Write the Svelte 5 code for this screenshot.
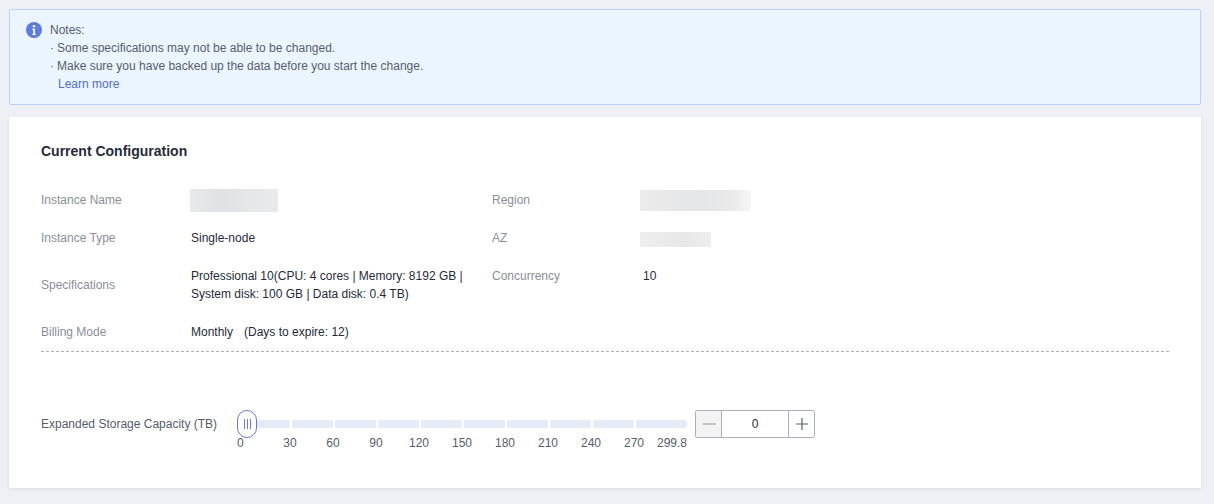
<script lang="ts">
  const middleTicks = [30, 60, 90, 120, 150, 180, 210, 240, 270];
  const middleSegments = 8;
  let capacity = 0;
</script>

<div class="page">
  <div class="notice">
    <svg class="notice-icon" viewBox="0 0 16 16" width="16" height="16">
      <circle cx="8" cy="8" r="8" fill="#5e7ce0" />
      <circle cx="8" cy="4.3" r="1.3" fill="#fff" />
      <path d="M6.4 6.7h2.6v5.2h1v1.2H6.2v-1.2h1.1V7.9H6.4z" fill="#fff" />
    </svg>
    <div class="notice-text">
      <div>Notes:</div>
      <div class="bullet"><span class="dot">·</span>Some specifications may not be able to be changed.</div>
      <div class="bullet"><span class="dot">·</span>Make sure you have backed up the data before you start the change.</div>
      <a class="learn" href="#more">Learn more</a>
    </div>
  </div>

  <div class="card">
    <h2>Current Configuration</h2>

    <div class="rows">
      <div class="row">
        <div class="field">
          <span class="label">Instance Name</span>
          <span class="blur blur-name"></span>
        </div>
        <div class="field side">
          <span class="label">Region</span>
          <span class="blur blur-region"></span>
        </div>
      </div>
      <div class="row">
        <div class="field">
          <span class="label">Instance Type</span>
          <span class="value">Single-node</span>
        </div>
        <div class="field side">
          <span class="label">AZ</span>
          <span class="blur blur-az"></span>
        </div>
      </div>
      <div class="row">
        <div class="field">
          <span class="label">Specifications</span>
          <span class="value specs">Professional 10(CPU: 4 cores | Memory: 8192 GB |<br />System disk: 100 GB | Data disk: 0.4 TB)</span>
        </div>
        <div class="field side top">
          <span class="label">Concurrency</span>
          <span class="value concurrency">10</span>
        </div>
      </div>
      <div class="row">
        <div class="field">
          <span class="label">Billing Mode</span>
          <span class="value">Monthly<span class="expire">(Days to expire: 12)</span></span>
        </div>
      </div>
    </div>

    <div class="divider"></div>

    <div class="expand">
      <span class="expand-label">Expanded Storage Capacity (TB)</span>
      <div class="slider">
        <div class="track">
          <span class="seg first"></span>
          {#each Array(middleSegments) as _}
            <span class="seg"></span>
          {/each}
          <span class="seg last"></span>
        </div>
        <div class="handle">
          <i></i><i></i><i></i>
        </div>
        <div class="ticks">
          <span class="tick-start">0</span>
          {#each middleTicks as t}
            <span class="tick">{t}</span>
          {/each}
          <span class="tick-end">299.8</span>
        </div>
      </div>
      <div class="stepper">
        <button class="step minus" aria-label="Decrease">
          <svg viewBox="0 0 14 14" width="14" height="14"><path d="M1 7h13" stroke="#adb0b8" stroke-width="1.4" /></svg>
        </button>
        <input class="num" value={capacity} />
        <button class="step plus" aria-label="Increase">
          <svg viewBox="0 0 14 14" width="14" height="14"><path d="M1 7h12M7 1v12" stroke="#575d6c" stroke-width="1.2" /></svg>
        </button>
      </div>
    </div>
  </div>
</div>

<style>
  :global(body) {
    margin: 0;
    background: #eef0f5;
  }

  .page {
    padding: 9px 13px 16px 9px;
    font-family: "Liberation Sans", Arial, sans-serif;
    font-size: 12px;
    line-height: 18px;
    color: #575d6c;
  }

  .notice {
    display: flex;
    gap: 8px;
    padding: 11px 16px 11px 16px;
    height: 96px;
    box-sizing: border-box;
    background: #ebf5ff;
    border: 1px solid #bccfff;
    border-radius: 2px;
  }

  .notice-icon {
    flex: none;
    margin-top: 1px;
  }

  .bullet {
    position: relative;
    padding-left: 7px;
  }

  .dot {
    position: absolute;
    left: 0;
    top: 0;
  }

  .learn {
    display: block;
    padding-left: 8px;
    color: #526ecc;
    text-decoration: none;
  }

  .card {
    margin-top: 12px;
    height: 371px;
    box-sizing: border-box;
    padding: 24px 32px 0;
    background: #fff;
    box-shadow: 0 1px 4px rgba(0, 0, 0, 0.08);
  }

  h2 {
    margin: 0;
    font-size: 14px;
    line-height: 20px;
    font-weight: 700;
    color: #252b3a;
  }

  .rows {
    display: flex;
    flex-direction: column;
    gap: 20px;
    margin-top: 30px;
  }

  .row {
    display: grid;
    grid-template-columns: 451px 1fr;
  }

  .field {
    display: flex;
    align-items: center;
  }

  .field.top {
    align-items: flex-start;
  }

  .label {
    flex: none;
    width: 150px;
    color: #8a8e99;
  }

  .side .label {
    width: 148px;
  }

  .value {
    color: #252b3a;
  }

  .specs {
    width: 280px;
  }

  .concurrency {
    padding-left: 3px;
  }

  .expire {
    margin-left: 11px;
  }

  .blur {
    display: block;
    background: linear-gradient(90deg, #e8e9ea, #e1e2e4 35%, #e6e7e9 70%, #e9eaeb);
  }

  .blur-name {
    width: 88px;
    height: 23px;
    margin: -2px 0 -3px -1px;
  }

  .blur-region {
    width: 111px;
    height: 21px;
    margin: -1px 0 -2px;
    background: linear-gradient(90deg, #ebebec, #e5e6e7 55%, #eaeaeb 85%, #f8f8f8);
  }

  .blur-az {
    width: 71px;
    height: 15px;
    margin: 1px 0 -1px;
    background: linear-gradient(90deg, #eeeeef, #e8e8e9 65%, #eeeeee);
  }

  .divider {
    margin-top: 10px;
    border-top: 1px dashed #adb0b8;
  }

  .expand {
    display: flex;
    align-items: flex-start;
    margin-top: 58px;
  }

  .expand-label {
    flex: none;
    width: 196px;
    margin-top: 5px;
  }

  .slider {
    position: relative;
    width: 450px;
    padding-top: 10px;
  }

  .track {
    display: flex;
    gap: 2px;
    margin-left: 3px;
    height: 8px;
  }

  .seg {
    width: 41px;
    background: #e7ebf8;
  }

  .seg.first {
    width: 50px;
  }

  .seg.last {
    width: 51px;
    border-radius: 0 3px 3px 0;
  }

  .handle {
    position: absolute;
    left: 0;
    top: 0;
    width: 20px;
    height: 28px;
    box-sizing: border-box;
    display: flex;
    justify-content: center;
    align-items: center;
    gap: 2px;
    background: #fff;
    border: 1px solid #5e7ce0;
    border-radius: 10px;
  }

  .handle i {
    width: 1px;
    height: 10px;
    background: #5e7ce0;
  }

  .ticks {
    display: flex;
    margin-top: 6px;
  }

  .tick-start {
    width: 31.5px;
  }

  .tick {
    width: 43px;
    text-align: center;
  }

  .tick-end {
    flex: 1;
    text-align: right;
  }

  .stepper {
    display: flex;
    height: 28px;
    width: 120px;
    margin-left: 8px;
    box-sizing: border-box;
    border: 1px solid #adb0b8;
    border-radius: 2px;
  }

  .step {
    flex: none;
    display: flex;
    align-items: center;
    justify-content: center;
    width: 26px;
    padding: 0;
    border: none;
    background: #fff;
  }

  .minus {
    background: #f3f3f3;
    border-right: 1px solid #adb0b8;
  }

  .plus {
    border-left: 1px solid #adb0b8;
  }

  .num {
    flex: 1;
    min-width: 0;
    width: 0;
    padding: 0;
    border: none;
    text-align: center;
    font: inherit;
    color: #252b3a;
  }
</style>
